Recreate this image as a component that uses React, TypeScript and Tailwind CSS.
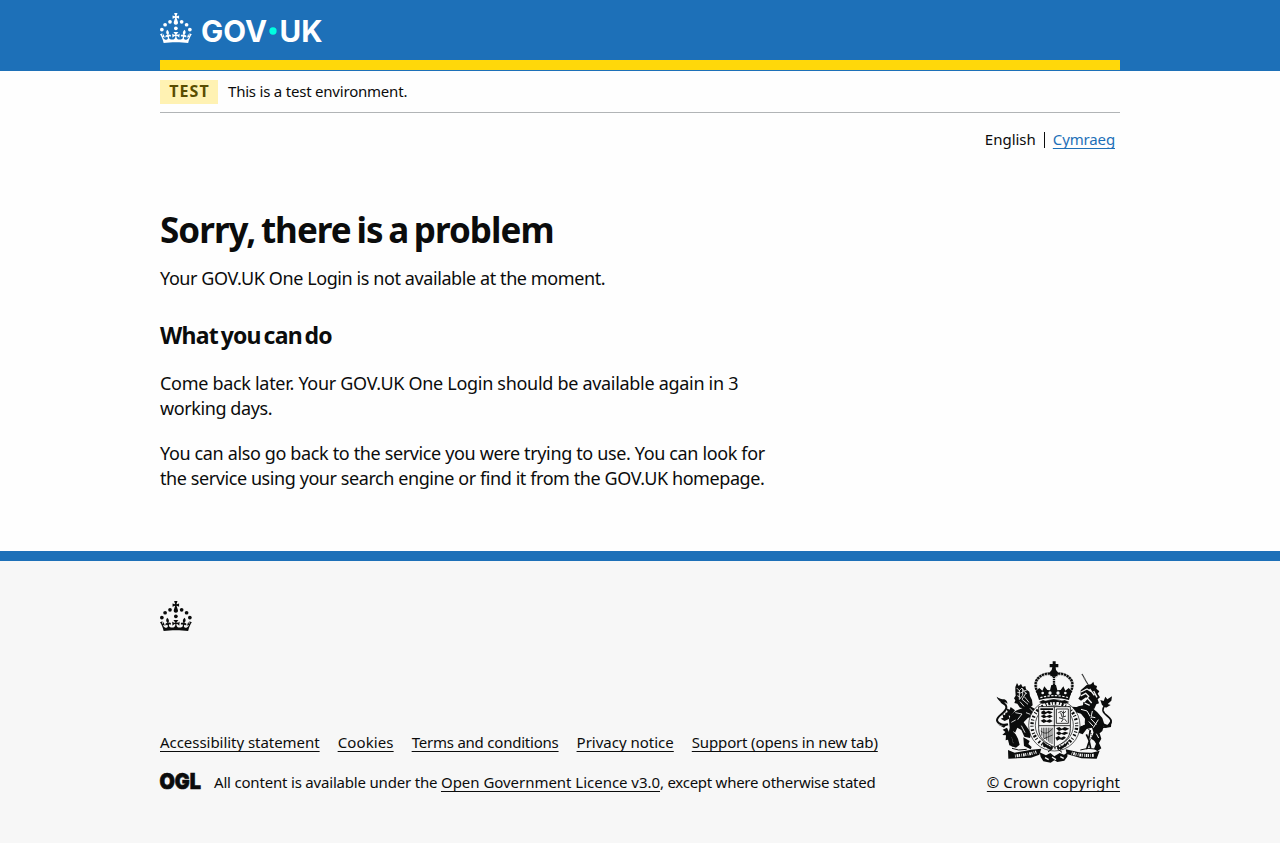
import type { ReactNode } from 'react';

const CROWN =
  'M33.1,9.8c.2-.1.3-.3.5-.5l4.6,2.4v-6.8l-4.6,1.5c-.1-.2-.3-.3-.5-.5l1.9-5.9h-6.7l1.9,5.9c-.2.1-.3.3-.5.5l-4.6-1.5v6.8l4.6-2.4c.1.2.3.3.5.5l-2.6,8c-.9,2.8,1.2,5.7,4.1,5.7h0c3,0,5.1-2.9,4.1-5.7l-2.6-8ZM37,37.9s-3.4,3.8-4.1,6.1c2.2,0,4.2-.5,6.4-2.8l-.7,8.5c-2-2.8-4.4-4.1-5.7-3.8.1,3.1.5,6.7,5.8,7.2,3.7.3,6.7-1.5,7-3.8.4-2.6-2-4.3-3.7-1.6-1.4-4.5,2.4-6.1,4.9-3.2-1.9-4.5-1.8-7.7,2.4-10.9,3,4,2.6,7.3-1.2,11.1,2.4-1.3,6.2,0,4,4.6-1.2-2.8-3.7-2.2-4.2.2-.3,1.7.7,3.7,3,4.2,1.9.3,4.7-.9,7-5.9-1.3,0-2.4.7-3.9,1.7l2.4-8c.6,2.3,1.4,3.7,2.2,4.5.6-1.6.5-2.8,0-5.3l5,1.8c-2.6,3.6-5.2,8.7-7.3,17.5-7.4-1.1-15.7-1.7-24.5-1.7h0c-8.8,0-17.1.6-24.5,1.7-2.1-8.9-4.7-13.9-7.3-17.5l5-1.8c-.5,2.5-.6,3.7,0,5.3.8-.8,1.6-2.3,2.2-4.5l2.4,8c-1.5-1-2.6-1.7-3.9-1.7,2.3,5,5.2,6.2,7,5.9,2.3-.4,3.3-2.4,3-4.2-.5-2.4-3-3.1-4.2-.2-2.2-4.6,1.6-6,4-4.6-3.7-3.7-4.2-7.1-1.2-11.1,4.2,3.2,4.3,6.4,2.4,10.9,2.5-2.8,6.3-1.3,4.9,3.2-1.8-2.7-4.1-1-3.7,1.6.3,2.3,3.3,4.1,7,3.8,5.4-.5,5.7-4.2,5.8-7.2-1.3-.2-3.7,1-5.7,3.8l-.7-8.5c2.2,2.3,4.2,2.7,6.4,2.8-.7-2.3-4.1-6.1-4.1-6.1h10.6,0Z';

function Crown() {
  return (
    <g>
      <circle cx="20" cy="17.6" r="3.7" />
      <circle cx="10.2" cy="23.5" r="3.7" />
      <circle cx="3.7" cy="33.2" r="3.7" />
      <circle cx="31.7" cy="30.6" r="3.7" />
      <circle cx="43.3" cy="17.6" r="3.7" />
      <circle cx="53.2" cy="23.5" r="3.7" />
      <circle cx="59.7" cy="33.2" r="3.7" />
      <path d={CROWN} />
    </g>
  );
}

function GovLogo() {
  return (
    <svg width="162" height="30" viewBox="0 0 324 60" fill="currentColor" className="overflow-visible" role="img" aria-label="GOV.UK">
      <Crown />
      <text x="82" y="57.5" fontSize="59" fontWeight="700" fontFamily="Inter, sans-serif" textLength="132" lengthAdjust="spacingAndGlyphs">GOV</text>
      <circle cx="226" cy="36" r="7.3" fill="#00ffe0" />
      <text x="239" y="57.5" fontSize="59" fontWeight="700" fontFamily="Inter, sans-serif" textLength="86" lengthAdjust="spacingAndGlyphs">UK</text>
    </svg>
  );
}

function Lion() {
  return (
    <g>
      <path fill="none" stroke="#0b0c0c" strokeWidth="6" d="M84 222c-14 4-31-1-33-12-1-14 27-22 28-38 1-11-9-13-16-17" />
      <path d="M50 139c8 6 15 8 23 8 6 2 10 7 9 14-5-6-9-5-12 0-6-6-16-10-20-22ZM52 222l12 4 18-4-10 10Z" />
      <path d="M106 110l5-12 5 9 7-6 5 9 8-3 2 10 10 7 2 13 6 12 2 16-10 8-14 1-14-2-8-12-9-2 3-8-4-6 5-8-1-14Z" />
      <path fill="none" stroke="#f7f7f7" strokeWidth="2.5" d="M110 113l8 8 8-8 6 9 8-2M112 126l10 2 9-5 10 7M112 136l9 5M118 119v29M128 116v19l-9 12M138 128l-12 19 18 15M133 139l14 17M120 154l12 14" />
      <path d="M87 208c3-16 18-27 34-32 9-4 18-10 28-10l16 10 14 3-3 7 12 4-5 7 3 10-14-8 1 10-11-9-18 2-13 14 14 20 9 13-4 14-17-4-9-20-12-7-7 16 9 17 5 18-11 9-15-5 7-9-4-14-11-12 4-20Z" />
      <path d="M86 194l-9-8-2 9-8-4 3 11-8 3 12 7 14-7ZM81 232l-13 6 8 7-9 9 11 1-1 15 7-2 4 17 12 4-2-20ZM130 261l19 11-4 9 10 9-3 7-20-10ZM105 180l-13-10-3 8-10-4 4 11-8 5 17 8Z" />
      <path fill="none" stroke="#f7f7f7" strokeWidth="2.5" d="M106 187l20 4-13 17M94 216l13-7M100 244l14 12M124 226l11 21M138 187l13 5M150 174l10 11" />
    </g>
  );
}

function Unicorn() {
  return (
    <g>
      <path fill="none" stroke="#0b0c0c" strokeWidth="3.5" strokeDasharray="3 1" d="M306 71l22 39" />
      <path d="M302 120l18-16 13-2 7-8 3 10 8 3-2 8 9 8-5 7 7 11-7 6 4 12-8 3-6 13-17 3-18-7 2-15 13-10-5-5-15 10-8-6 7-11Z" />
      <path fill="none" stroke="#f7f7f7" strokeWidth="4" d="M303 125l18-9 12 7M302 137l15-8 9 9-14 17M329 116l14 19M341 122l10 19M323 144l12 14M314 158l15 7" />
      <path d="M278 177l17-9 21-5 18 7 18 16 15 17 6 19-6 20-14 12-9 18-11-7 8-17-5-16-16 4-12 16-17-6 8-18 15-5 1-18-12-15-15-4-20 2 10-10Z" />
      <path d="M340 247l19 2 5 16-7 13 7 16-12 9-10-8 6-15-8-13ZM276 169l21 2-5 13-18 2Z" />
      <path fill="none" stroke="#0b0c0c" strokeWidth="5" d="M306 235l-18 13-4 8M319 252l9 20-8 24M331 239l-5 27 6 27M362 231c10 2 25-5 31-14 5-17-21-20-24-36-2-13 9-18 20-31" />
      <path d="M366 164l-5-15 10 3 5-13 6 8 14-9-2 13-11 10 9 3-14 8ZM366 217l17 7 12-17-2 23-17 3Z" />
      <path fill="none" stroke="#f7f7f7" strokeWidth="3" d="M303 177l18 5 10 17 15 3M337 182l-5 23 17 18M355 208l-15 24M326 213l14 15M315 220l-18 9M349 250l7 13" />
      <path fill="none" stroke="#0b0c0c" strokeWidth="3" strokeDasharray="4 3" d="M332 176v27l-11 24 15 28-17 44" />
    </g>
  );
}

function CoatOfArms() {
  return (
    <svg width="120" height="103" viewBox="39 29 360 309" fill="#0b0c0c" className="overflow-visible" aria-hidden="true">
      <Lion />
      <Unicorn />
      <ellipse cx="223" cy="225" rx="77" ry="77" fill="#f7f7f7" stroke="#0b0c0c" strokeWidth="2" />
      <ellipse cx="223" cy="225" rx="67" ry="67" fill="none" stroke="#0b0c0c" strokeWidth="10" strokeDasharray="3 5 6 5 3 6 5 8" />
      <ellipse cx="223" cy="225" rx="57" ry="59" fill="#f7f7f7" stroke="#0b0c0c" strokeWidth="2" />
      <path fill="#f7f7f7" stroke="#0b0c0c" strokeWidth="2.5" d="M176 169h95v66c0 29-20 43-47 56-27-13-48-27-48-56Z" />
      <path d="M181 174h38v5h-38ZM184 184l8-4 5 5 9-4 12 5-8 5-8-3-9 5-9-3ZM182 197l10-4 7 5 10-5 9 5-9 5-8-3-10 4ZM182 211l10-5 8 5 9-4 9 5-9 5-10-3-8 4ZM228 234l10-4 7 5 9-5 14 5-12 6-9-3-10 4ZM228 248l9-5 8 6 10-5 11 4-13 6-9-3-8 4ZM226 262l10-5 7 5 9-4 6 4-10 7-9-2-8 4Z" />
      <path fill="none" stroke="#0b0c0c" strokeWidth="2.5" d="M223 170v119M177 226h93M229 176h36v43h-36ZM235 187l9-4 6 6 8-6M242 187l5 14 11-4M237 202l13 4-6 9M253 205l7 9M250 181v18" />
      <path fill="none" stroke="#0b0c0c" strokeWidth="2" d="M185 232v24M190 232v31M195 232v34M200 232v38M205 232v42M210 232v46M216 232v49M182 242c18 14 25 2 36-7M190 266l28-12" />
      <path d="M177 155l12-6 9 3 23-5 23 5 10-3 14 6-12 5-22-5-24 1-22 4ZM189 274l14 11 17 7-9 7-23-14ZM235 292l20-10 14-15-8 18-20 14Z" />
      <g fill="none" stroke="#0b0c0c">
        <path strokeWidth="9" strokeDasharray="7 1.5" d="M178 134c-19-31-11-52 14-61 12-5 23-2 28 6M266 134c19-31 11-52-14-61-12-5-22-2-27 6" />
        <path stroke="#f7f7f7" strokeWidth="2.5" d="M181 133c-17-29-10-47 11-56 12-5 22-2 26 7M263 133c17-29 10-47-11-56-12-5-22-2-26 7" />
        <path strokeWidth="7" strokeDasharray="5 2" d="M222 78v42" />
      </g>
      <path d="M218 33h9v8h8v10h-8l1 8 7 8-5 10h-17l-5-10 7-8 2-8h-8V41h9Z" />
      <path d="M168 121l10-8 9 8 6-13 9 11 8 1 4-16h14l4 16 10-1 8-11 6 13 10-8 9 9-8 27c-28-8-64-8-90 0Z" />
      <path fill="none" stroke="#f7f7f7" strokeWidth="3.5" strokeDasharray="7 4" d="M181 142c26-8 60-8 84 0" />
      <g fill="#f7f7f7"><circle cx="188" cy="128" r="4" /><circle cx="210" cy="128" r="5" /><circle cx="234" cy="128" r="5" /><circle cx="256" cy="128" r="4" /></g>
      <path d="M84 299l20 8 50-9 30-3-6 18-25 9-68 3ZM257 297l40 9 38 1 24-6-9 24-46-1-44-13Z" />
      <path fill="none" stroke="#f7f7f7" strokeWidth="9" strokeDasharray="2 3 5 2 3 4" d="M105 317c23-3 44-5 64-12M275 308c22 8 45 8 68 7" />
      <path d="M179 306l19 9 13-7 12 10 16-10 13 5 11-7-1 13-9 12-21 4-9-5-11 7-22-4-8-13Z" />
      <path fill="none" stroke="#f7f7f7" strokeWidth="4" d="M195 322l11 6M216 320l12 8M241 319l10 5" />
      <path fill="none" stroke="#0b0c0c" strokeWidth="3" d="M96 294l20 5 24-2M301 299l23-5 29 3M204 305l12-9M233 296l13 10" />
    </svg>
  );
}

function Link({ children, className = '' }: { children: ReactNode; className?: string }) {
  return (
    <a href="#" className={`underline decoration-1 underline-offset-3 [text-decoration-skip-ink:none] ${className}`}>
      {children}
    </a>
  );
}

export default function App() {
  return (
    <div className="min-h-[843px] bg-[#f7f7f7] font-['Noto_Sans',sans-serif] text-[#0b0c0c]">
      <header className="h-[71px] bg-[#1d70b8] text-white">
        <div className="mx-auto flex h-[70px] w-[960px] flex-col justify-between border-b-10 border-[#ffd80a] pt-[13px]">
          <a href="#" className="block w-[162px]"><GovLogo /></a>
        </div>
      </header>

      <div className="h-[480px] bg-[#fefefe]">
        <div className="mx-auto w-[960px]">
          <div className="flex h-[42px] items-center gap-[10px] border-b border-[#b1b4b6] text-[15px] leading-5">
            <strong className="flex h-6 w-[58px] items-center justify-center bg-[#fff2b3] pb-0.5 pl-px text-[16px] tracking-[1.1px] text-[#594d00]">TEST</strong>
            <span className="pb-0.5 tracking-[-0.21px]">This is a test environment.</span>
          </div>

          <nav className="flex h-[54px] items-center justify-end pr-[5px] text-[15px] leading-5">
            <span className="pb-0.5">English</span>
            <span className="mx-2 h-4 w-px bg-[#0b0c0c]" />
            <Link className="pb-0.5 tracking-[-0.14px] text-[#1d70b8]">Cymraeg</Link>
          </nav>

          <main className="w-[630px] pt-[38px] text-[18px] leading-[25px]">
            <h1 className="text-[35px] leading-[50px] font-bold tracking-[-0.96px] [word-spacing:-2.5px]">Sorry, there is a problem</h1>
            <p className="mt-[11px] tracking-[-0.41px]">Your GOV.UK One Login is not available at the moment.</p>
            <h2 className="mt-[29px] text-[23px] leading-[30px] font-bold tracking-[-0.76px] [word-spacing:-2.5px]">What you can do</h2>
            <p className="mt-[21px]">
              <span className="block tracking-[-0.3px]">Come back later. Your GOV.UK One Login should be available again in 3</span>
              <span className="block tracking-[-0.41px]">working days.</span>
            </p>
            <p className="mt-5">
              <span className="block tracking-[-0.36px]">You can also go back to the service you were trying to use. You can look for</span>
              <span className="block tracking-[-0.42px]">the service using your search engine or find it from the GOV.UK homepage.</span>
            </p>
          </main>
        </div>
      </div>

      <footer className="border-t-10 border-[#1d70b8]">
        <div className="mx-auto w-[960px] pt-10 text-[15px] leading-5">
          <svg width="32" height="30" viewBox="0 0 64 60" fill="#0b0c0c" className="block"><Crown /></svg>
          <div className="mt-[29px] flex items-end justify-between">
            <div>
              <div className="flex gap-[18px] whitespace-nowrap">
                <Link className="tracking-[-0.04px]">Accessibility statement</Link>
                <Link className="tracking-[0.12px]">Cookies</Link>
                <Link className="tracking-[-0.22px]">Terms and conditions</Link>
                <Link>Privacy notice</Link>
                <Link className="tracking-[-0.15px]">Support (opens in new tab)</Link>
              </div>
              <div className="mt-5 mb-px flex items-center">
                <svg width="41" height="18" viewBox="0 0 41 18" className="mr-[13px] overflow-visible" fill="#0b0c0c">
                  <text x="-0.5" y="16.3" fontFamily="Inter, sans-serif" fontWeight="900" fontSize="22" stroke="#0b0c0c" strokeWidth="0.7" textLength="41.5" lengthAdjust="spacingAndGlyphs">OGL</text>
                </svg>
                <span className="whitespace-pre">
                  <span className="tracking-[-0.19px]">All content is available under the </span>
                  <Link className="tracking-[-0.03px]">Open Government Licence v3.0</Link>
                  <span className="tracking-[-0.26px]">, except where otherwise stated</span>
                </span>
              </div>
            </div>
            <div className="mb-px flex flex-col items-center">
              <CoatOfArms />
              <Link className="mt-[9px] tracking-[0.05px]">© Crown copyright</Link>
            </div>
          </div>
        </div>
      </footer>
    </div>
  );
}
